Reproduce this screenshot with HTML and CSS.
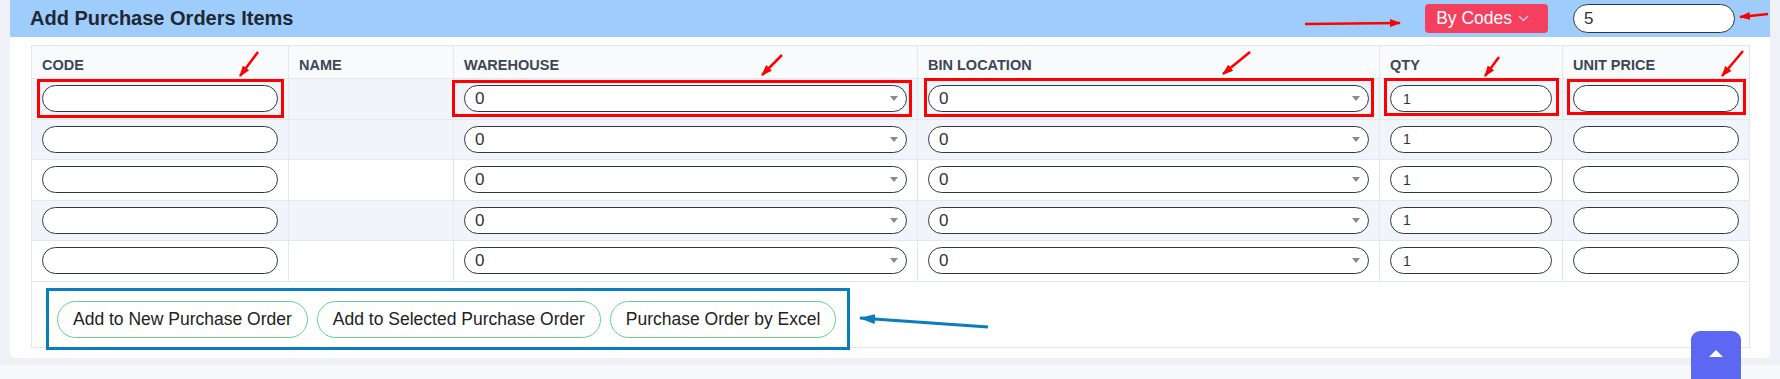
FILE: index.html
```html
<!DOCTYPE html>
<html lang="en">
<head>
    <meta charset="UTF-8">
    <meta name="viewport" content="width=device-width, initial-scale=1.0">
    <title>Add Purchase Orders Items</title>
    <link rel="stylesheet" href="styles.css">
</head>
<body>

    <div class="page">
        <div class="card">
            <div class="card-header">
                <h2 class="card-title">Add Purchase Orders Items</h2>
                <div class="header-tools">
                    <button class="mode-btn">By Codes
                        <svg class="chev" width="11" height="7" viewBox="0 0 11 7"><polyline points="1,1 5.5,5.5 10,1" fill="none" stroke="#c4c7d2" stroke-width="1.5"/></svg>
                    </button>
                    <input class="count-input" type="text" value="5">
                </div>
            </div>

            <div class="table-wrap">
                <table class="items">
                    <colgroup>
                        <col style="width: 257px">
                        <col style="width: 165px">
                        <col style="width: 464px">
                        <col style="width: 462px">
                        <col style="width: 183px">
                        <col style="width: 187px">
                    </colgroup>
                    <thead>
                        <tr>
                            <th>Code</th>
                            <th>Name</th>
                            <th>Warehouse</th>
                            <th>Bin Location</th>
                            <th>Qty</th>
                            <th>Unit Price</th>
                        </tr>
                    </thead>
                    <tbody>
                        <tr class="shaded">
                            <td><input class="pill" type="text"></td>
                            <td></td>
                            <td><div class="select-wrap"><select class="pill"><option>0</option></select></div></td>
                            <td><div class="select-wrap"><select class="pill"><option>0</option></select></div></td>
                            <td><input class="pill qty" type="text" value="1"></td>
                            <td><input class="pill" type="text"></td>
                        </tr>
                        <tr class="shaded">
                            <td><input class="pill" type="text"></td>
                            <td></td>
                            <td><div class="select-wrap"><select class="pill"><option>0</option></select></div></td>
                            <td><div class="select-wrap"><select class="pill"><option>0</option></select></div></td>
                            <td><input class="pill qty" type="text" value="1"></td>
                            <td><input class="pill" type="text"></td>
                        </tr>
                        <tr>
                            <td><input class="pill" type="text"></td>
                            <td></td>
                            <td><div class="select-wrap"><select class="pill"><option>0</option></select></div></td>
                            <td><div class="select-wrap"><select class="pill"><option>0</option></select></div></td>
                            <td><input class="pill qty" type="text" value="1"></td>
                            <td><input class="pill" type="text"></td>
                        </tr>
                        <tr class="shaded">
                            <td><input class="pill" type="text"></td>
                            <td></td>
                            <td><div class="select-wrap"><select class="pill"><option>0</option></select></div></td>
                            <td><div class="select-wrap"><select class="pill"><option>0</option></select></div></td>
                            <td><input class="pill qty" type="text" value="1"></td>
                            <td><input class="pill" type="text"></td>
                        </tr>
                        <tr>
                            <td><input class="pill" type="text"></td>
                            <td></td>
                            <td><div class="select-wrap"><select class="pill"><option>0</option></select></div></td>
                            <td><div class="select-wrap"><select class="pill"><option>0</option></select></div></td>
                            <td><input class="pill qty" type="text" value="1"></td>
                            <td><input class="pill" type="text"></td>
                        </tr>
                    </tbody>
                    <tfoot>
                        <tr>
                            <td colspan="6">
                                <div class="actions">
                                    <button class="outline-btn">Add to New Purchase Order</button>
                                    <button class="outline-btn">Add to Selected Purchase Order</button>
                                    <button class="outline-btn">Purchase Order by Excel</button>
                                </div>
                            </td>
                        </tr>
                    </tfoot>
                </table>
            </div>
        </div>
    </div>
    <div class="footer-strip"></div>

    <button class="to-top"><span class="tri"></span></button>

    <!-- annotation marks drawn over the screenshot -->
    <svg class="marks" width="1780" height="379" viewBox="0 0 1780 379">
        <defs>
            <marker id="headRed" markerWidth="11" markerHeight="8" refX="10" refY="4" orient="auto" markerUnits="userSpaceOnUse">
                <path d="M0,0 L11,4 L0,8 z" fill="#f00"/>
            </marker>
            <marker id="headBlue" markerWidth="16" markerHeight="10" refX="15" refY="5" orient="auto" markerUnits="userSpaceOnUse">
                <path d="M0,0 L16,5 L0,10 z" fill="#0a7cc0"/>
            </marker>
        </defs>
        <g fill="none" stroke="#f00" stroke-width="3">
            <rect x="38.5" y="80.5" width="244" height="36"/>
            <rect x="453.5" y="81.5" width="457" height="34"/>
            <rect x="925.5" y="79.5" width="447" height="36"/>
            <rect x="1385.5" y="79.5" width="172" height="35"/>
            <rect x="1568.5" y="80.5" width="176" height="33"/>
        </g>
        <g stroke="#f00" stroke-width="2.5" marker-end="url(#headRed)">
            <line x1="258" y1="52" x2="240" y2="76"/>
            <line x1="782" y1="55" x2="762" y2="75"/>
            <line x1="1250" y1="52" x2="1223" y2="74"/>
            <line x1="1499" y1="57" x2="1485" y2="76"/>
            <line x1="1743" y1="51" x2="1722" y2="76"/>
            <line x1="1305" y1="24" x2="1400" y2="23"/>
            <line x1="1768" y1="14" x2="1740" y2="17"/>
        </g>
        <rect x="47.5" y="289.5" width="801" height="59" fill="none" stroke="#0a7cc0" stroke-width="3"/>
        <line x1="988" y1="327" x2="860" y2="318" stroke="#0a7cc0" stroke-width="3" marker-end="url(#headBlue)"/>
    </svg>

</body>
</html>
```

FILE: styles.css
```css
body {
    font-family: "Liberation Sans", Arial, sans-serif;
    background-color: #eef1f5;
    margin: 0;
    color: #333;
    position: relative;
    height: 379px;
    overflow: hidden;
}

.page {
    padding: 0 10px 7px;
}

.card {
    background-color: #ffffff;
    border-radius: 0 0 5px 5px;
    padding-bottom: 10px;
}

.card-header {
    background-color: #9ecdfc;
    height: 37px;
    display: flex;
    align-items: center;
    justify-content: space-between;
    padding: 0 35px 0 20px;
}

.card-title {
    margin: 0;
    font-size: 20px;
    font-weight: bold;
    color: #1f2733;
}

.header-tools {
    display: flex;
    align-items: center;
    gap: 25px;
}

.mode-btn {
    display: flex;
    align-items: center;
    gap: 6px;
    height: 29px;
    padding: 0 19px 0 11px;
    border: none;
    border-radius: 4px;
    background-color: #f43f5e;
    color: #fff;
    font-family: inherit;
    font-size: 17.5px;
}

.count-input {
    width: 162px;
    height: 29px;
    box-sizing: border-box;
    border: 1px solid #2d3748;
    border-radius: 15px;
    padding: 0 10px;
    font-family: inherit;
    font-size: 17px;
    color: #333;
}

.table-wrap {
    padding: 8px 21px 0;
}

.items {
    width: 100%;
    border-collapse: collapse;
    table-layout: fixed;
}

.items th,
.items td {
    border: 1px solid #e2e8f0;
}

.items th {
    background-color: #f8fafc;
    text-align: left;
    text-transform: uppercase;
    font-size: 14.5px;
    font-weight: bold;
    color: #3d4756;
    padding: 11px 10px 5px;
}

.items tbody tr {
    height: 40.5px;
}

.items tbody td {
    padding: 6px 10px;
}

.items tbody tr.shaded td {
    background-color: #f1f4f9;
}

.pill {
    display: block;
    width: 100%;
    height: 27px;
    box-sizing: border-box;
    border: 1px solid #2d3748;
    border-radius: 14px;
    background-color: #fff;
    padding: 0 10px;
    font-family: inherit;
    font-size: 17px;
    color: #333;
    outline: none;
}

.pill.qty {
    font-size: 14px;
    padding-left: 12px;
}

select.pill {
    appearance: none;
    -webkit-appearance: none;
}

.select-wrap {
    position: relative;
}

/* dropdown caret */
.select-wrap::after {
    content: "";
    position: absolute;
    right: 9px;
    top: 11px;
    border-left: 4.5px solid transparent;
    border-right: 4.5px solid transparent;
    border-top: 5px solid #8a8a8a;
}

.items tfoot td {
    padding: 19px 25px 9px;
}

.actions {
    display: flex;
    gap: 9px;
}

.outline-btn {
    height: 37px;
    padding: 0 15px;
    border: 1px solid #5fd68a;
    border-radius: 19px;
    background-color: #fff;
    color: #222;
    font-family: inherit;
    font-size: 17.5px;
}

.footer-strip {
    background-color: #f7f8fa;
    height: 14px;
}

.to-top {
    position: fixed;
    left: 1691px;
    top: 331px;
    width: 50px;
    height: 48px;
    border: none;
    border-radius: 9px 9px 0 0;
    background-color: #5d68f2;
    display: flex;
    align-items: center;
    justify-content: center;
    padding: 0 0 4px;
}

.to-top .tri {
    border-left: 7px solid transparent;
    border-right: 7px solid transparent;
    border-bottom: 7px solid #fff;
}

.marks {
    position: absolute;
    left: 0;
    top: 0;
    pointer-events: none;
}
```
